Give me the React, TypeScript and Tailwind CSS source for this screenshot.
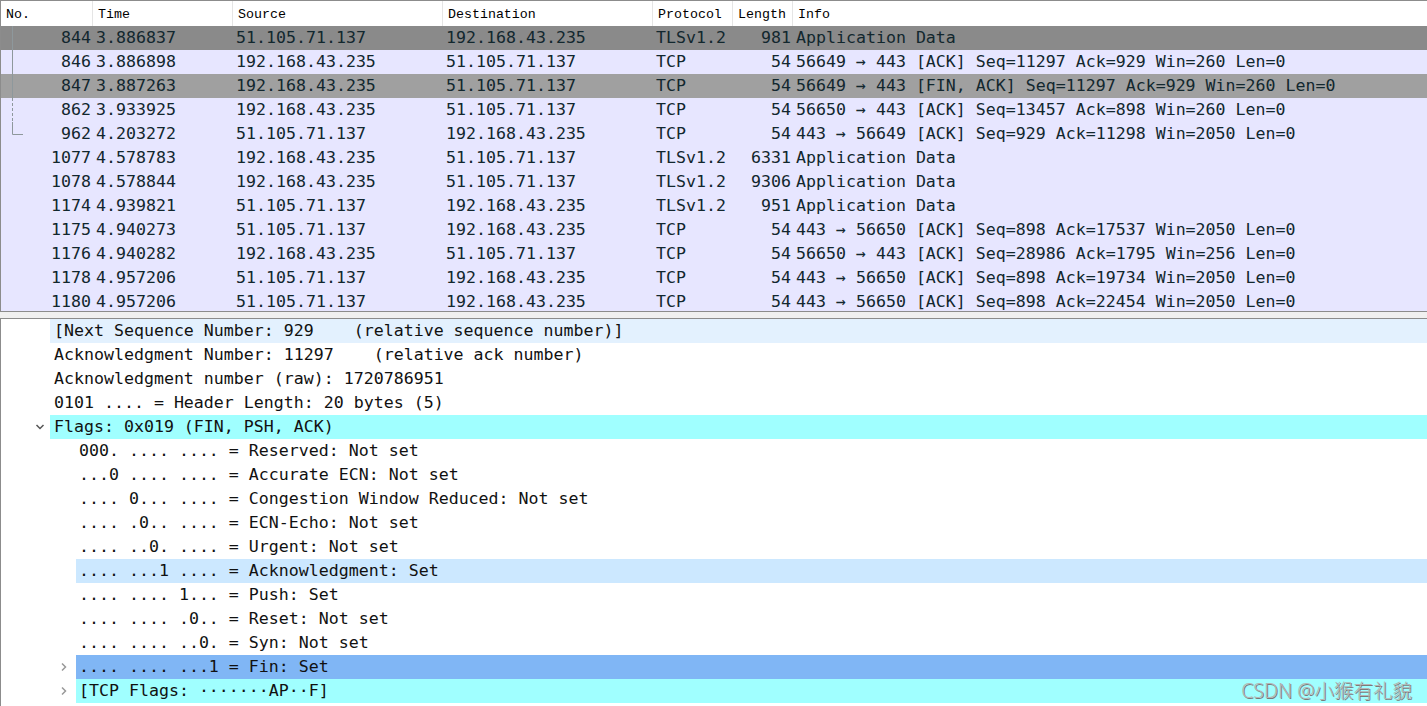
import React from "react";

type Packet = {
  no: number;
  time: string;
  src: string;
  dst: string;
  proto: string;
  len: number;
  info: string;
  bg?: string;
  tree?: "solid" | "dashed" | "end";
};

const packets: Packet[] = [
  { no: 844, time: "3.886837", src: "51.105.71.137", dst: "192.168.43.235", proto: "TLSv1.2", len: 981, info: "Application Data", bg: "bg-[#8a8a8a]", tree: "solid" },
  { no: 846, time: "3.886898", src: "192.168.43.235", dst: "51.105.71.137", proto: "TCP", len: 54, info: "56649 → 443 [ACK] Seq=11297 Ack=929 Win=260 Len=0", tree: "solid" },
  { no: 847, time: "3.887263", src: "192.168.43.235", dst: "51.105.71.137", proto: "TCP", len: 54, info: "56649 → 443 [FIN, ACK] Seq=11297 Ack=929 Win=260 Len=0", bg: "bg-[#a0a0a0]", tree: "solid" },
  { no: 862, time: "3.933925", src: "192.168.43.235", dst: "51.105.71.137", proto: "TCP", len: 54, info: "56650 → 443 [ACK] Seq=13457 Ack=898 Win=260 Len=0", tree: "dashed" },
  { no: 962, time: "4.203272", src: "51.105.71.137", dst: "192.168.43.235", proto: "TCP", len: 54, info: "443 → 56649 [ACK] Seq=929 Ack=11298 Win=2050 Len=0", tree: "end" },
  { no: 1077, time: "4.578783", src: "192.168.43.235", dst: "51.105.71.137", proto: "TLSv1.2", len: 6331, info: "Application Data" },
  { no: 1078, time: "4.578844", src: "192.168.43.235", dst: "51.105.71.137", proto: "TLSv1.2", len: 9306, info: "Application Data" },
  { no: 1174, time: "4.939821", src: "51.105.71.137", dst: "192.168.43.235", proto: "TLSv1.2", len: 951, info: "Application Data" },
  { no: 1175, time: "4.940273", src: "51.105.71.137", dst: "192.168.43.235", proto: "TCP", len: 54, info: "443 → 56650 [ACK] Seq=898 Ack=17537 Win=2050 Len=0" },
  { no: 1176, time: "4.940282", src: "192.168.43.235", dst: "51.105.71.137", proto: "TCP", len: 54, info: "56650 → 443 [ACK] Seq=28986 Ack=1795 Win=256 Len=0" },
  { no: 1178, time: "4.957206", src: "51.105.71.137", dst: "192.168.43.235", proto: "TCP", len: 54, info: "443 → 56650 [ACK] Seq=898 Ack=19734 Win=2050 Len=0" },
  { no: 1180, time: "4.957206", src: "51.105.71.137", dst: "192.168.43.235", proto: "TCP", len: 54, info: "443 → 56650 [ACK] Seq=898 Ack=22454 Win=2050 Len=0" },
];

type Field = {
  text: string;
  level: 1 | 2;
  bg?: string;
  chevron?: "open" | "closed";
};

const fields: Field[] = [
  { text: "[Next Sequence Number: 929    (relative sequence number)]", level: 1, bg: "bg-[#e3f1fe]" },
  { text: "Acknowledgment Number: 11297    (relative ack number)", level: 1 },
  { text: "Acknowledgment number (raw): 1720786951", level: 1 },
  { text: "0101 .... = Header Length: 20 bytes (5)", level: 1 },
  { text: "Flags: 0x019 (FIN, PSH, ACK)", level: 1, bg: "bg-[#a0ffff]", chevron: "open" },
  { text: "000. .... .... = Reserved: Not set", level: 2 },
  { text: "...0 .... .... = Accurate ECN: Not set", level: 2 },
  { text: ".... 0... .... = Congestion Window Reduced: Not set", level: 2 },
  { text: ".... .0.. .... = ECN-Echo: Not set", level: 2 },
  { text: ".... ..0. .... = Urgent: Not set", level: 2 },
  { text: ".... ...1 .... = Acknowledgment: Set", level: 2, bg: "bg-[#cce8ff]" },
  { text: ".... .... 1... = Push: Set", level: 2 },
  { text: ".... .... .0.. = Reset: Not set", level: 2 },
  { text: ".... .... ..0. = Syn: Not set", level: 2 },
  { text: ".... .... ...1 = Fin: Set", level: 2, bg: "bg-[#80b6f5]", chevron: "closed" },
  { text: "[TCP Flags: ·······AP··F]", level: 2, bg: "bg-[#a0ffff]", chevron: "closed" },
];

const cols = "grid grid-cols-[92px_140px_210px_210px_80px_60px_1fr]";
const mono = "font-['DejaVu_Sans_Mono','Liberation_Mono',monospace]";

function TreeLine({ kind }: { kind: Packet["tree"] }) {
  if (!kind) return null;
  return (
    <svg className="absolute left-[11px] top-0" width="14" height="24" aria-hidden>
      {kind === "solid" && <line x1="0.5" y1="0" x2="0.5" y2="24" stroke="#8e989c" />}
      {kind === "dashed" && <line x1="0.5" y1="0" x2="0.5" y2="24" stroke="#8e989c" strokeDasharray="3 2" />}
      {kind === "end" && <path d="M0.5 0V12.5H11" fill="none" stroke="#8e989c" />}
    </svg>
  );
}

function Chevron({ dir }: { dir: "open" | "closed" }) {
  if (dir === "open") {
    return (
      <svg width="10" height="8" viewBox="0 0 10 8" aria-hidden>
        <path d="M1.5 2L5 5.5L8.5 2" fill="none" stroke="#555" strokeWidth="1.5" />
      </svg>
    );
  }
  return (
    <svg width="8" height="10" viewBox="0 0 8 10" aria-hidden>
      <path d="M2 1.5L5.5 5L2 8.5" fill="none" stroke="#999" strokeWidth="1.5" />
    </svg>
  );
}

export default function App() {
  return (
    <div className="relative flex h-[706px] w-[1427px] flex-col overflow-hidden bg-white">
      {/* packet list */}
      <div className="h-[312px] shrink-0 overflow-hidden border-y border-l border-[#8c8c8c] bg-white">
        <div className={`${cols} h-[25px] items-center font-['Liberation_Mono',monospace] text-[13.3px] text-black`}>
          {["No.", "Time", "Source", "Destination", "Protocol", "Length", "Info"].map((h, i) => (
            <div
              key={h}
              className={`flex h-full items-center pl-[5px] pt-[2px] ${i < 6 ? "border-r border-[#e5e5e5]" : ""}`}
            >
              {h}
            </div>
          ))}
        </div>
        <div className={`${mono} text-[16.6px] text-[#12272e]`}>
          {packets.map((p) => (
            <div key={p.no} className={`${cols} h-6 items-center whitespace-pre ${p.bg ?? "bg-[#e7e6ff]"}`}>
              <div className="relative flex h-full items-center justify-end pr-[2px]">
                <TreeLine kind={p.tree} />
                {p.no}
              </div>
              <div className="pl-[3px]">{p.time}</div>
              <div className="pl-[3px]">{p.src}</div>
              <div className="pl-[3px]">{p.dst}</div>
              <div className="pl-[3px]">{p.proto}</div>
              <div className="pr-[2px] text-right">{p.len}</div>
              <div className="pl-[3px]">{p.info}</div>
            </div>
          ))}
        </div>
      </div>

      <div className="h-[6px] shrink-0 bg-[#f0f0f0]" />

      {/* packet details */}
      <div className={`flex-1 border-t border-l border-[#8c8c8c] ${mono} text-[16.6px] text-[#111]`}>
        {fields.map((f, i) => (
          <div key={i} className={`flex h-6 items-stretch ${f.level === 1 ? "pl-[49px]" : "pl-[75px]"}`}>
            <div className="relative flex flex-1 items-center">
              {f.chevron && (
                <span
                  className={`absolute top-1/2 flex -translate-y-1/2 items-center ${
                    f.chevron === "open" ? "left-[-15px]" : "left-[-16px]"
                  }`}
                >
                  <Chevron dir={f.chevron} />
                </span>
              )}
              <div
                className={`flex h-full flex-1 items-center whitespace-pre pt-[1px] ${
                  f.level === 1 ? "pl-[4px]" : "pl-[3px]"
                } ${f.bg ?? ""}`}
              >
                {f.text}
              </div>
            </div>
          </div>
        ))}
      </div>

      <div className="absolute bottom-[6px] right-[15px] font-['Noto_Sans','Noto_Sans_CJK_SC',sans-serif] text-[19.5px] font-light leading-none text-[#b4b4b4] [text-shadow:1px_1px_0_#7a7a7a]">
        CSDN @小猴有礼貌
      </div>
    </div>
  );
}
